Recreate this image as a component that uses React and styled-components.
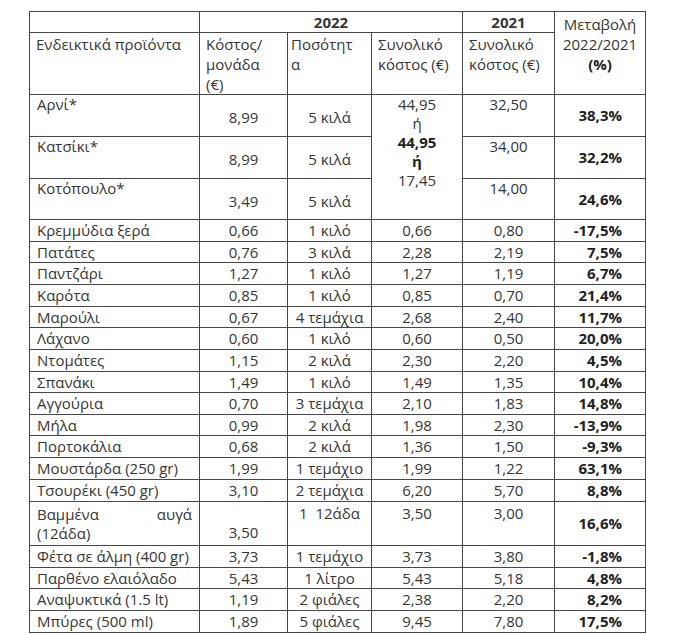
import styled, { createGlobalStyle } from "styled-components";

const GlobalStyle = createGlobalStyle`
    html, body {
        margin: 0;
        padding: 0;
        background: #ffffff;
    }
    body {
        font-family: "Open Sans", "Noto Sans", "DejaVu Sans", sans-serif;
        color: #363636;
    }
`

const Page = styled.div`
    padding: 11px 0 0 29px;
`

const Table = styled.table`
    border-collapse: collapse;
    table-layout: fixed;
    width: 617px;
    font-size: 15px;
    line-height: 19px;
`

const Row = styled.tr`
    height: ${({$h}) => $h}px;
`

const Cell = styled.td`
    border: 1px solid #474747;
    padding: ${({$pad}) => $pad || '0 7px'};
    vertical-align: ${({$valign}) => $valign || 'middle'};
    text-align: ${({$align}) => $align || 'left'};
    font-weight: ${({$bold}) => $bold ? 700 : 400};
    white-space: nowrap;
    overflow: hidden;
`

const HeadCell = styled(Cell)`
    padding: ${({$pad}) => $pad || '1px 6px 0 6px'};
    vertical-align: top;
    line-height: 20px;
`

const Pct = styled(Cell)`
    text-align: right;
    padding: 0 23px 0 0;
    font-weight: 700;
    color: #222222;
`

const Strong = styled.span`
    font-weight: 700;
    color: #222222;
`

const JustLine = styled.div`
    display: flex;
    justify-content: space-between;
`

const meat = [
    ["Αρνί*", "8,99", "5 κιλά", "32,50", "38,3%"],
    ["Κατσίκι*", "8,99", "5 κιλά", "34,00", "32,2%"],
    ["Κοτόπουλο*", "3,49", "5 κιλά", "14,00", "24,6%"],
]

const items = [
    ["Κρεμμύδια ξερά", "0,66", "1 κιλό", "0,66", "0,80", "-17,5%", 22],
    ["Πατάτες", "0,76", "3 κιλά", "2,28", "2,19", "7,5%", 21],
    ["Παντζάρι", "1,27", "1 κιλό", "1,27", "1,19", "6,7%", 22],
    ["Καρότα", "0,85", "1 κιλό", "0,85", "0,70", "21,4%", 22],
    ["Μαρούλι", "0,67", "4 τεμάχια", "2,68", "2,40", "11,7%", 21],
    ["Λάχανο", "0,60", "1 κιλό", "0,60", "0,50", "20,0%", 22],
    ["Ντομάτες", "1,15", "2 κιλά", "2,30", "2,20", "4,5%", 22],
    ["Σπανάκι", "1,49", "1 κιλό", "1,49", "1,35", "10,4%", 21],
    ["Αγγούρια", "0,70", "3 τεμάχια", "2,10", "1,83", "14,8%", 22],
    ["Μήλα", "0,99", "2 κιλά", "1,98", "2,30", "-13,9%", 21],
    ["Πορτοκάλια", "0,68", "2 κιλά", "1,36", "1,50", "-9,3%", 22],
    ["Μουστάρδα (250 gr)", "1,99", "1 τεμάχιο", "1,99", "1,22", "63,1%", 22],
    ["Τσουρέκι (450 gr)", "3,10", "2 τεμάχια", "6,20", "5,70", "8,8%", 22],
]

const tail = [
    ["Φέτα σε άλμη (400 gr)", "3,73", "1 τεμάχιο", "3,73", "3,80", "-1,8%", 22],
    ["Παρθένο ελαιόλαδο", "5,43", "1 λίτρο", "5,43", "5,18", "4,8%", 21],
    ["Αναψυκτικά (1.5 lt)", "1,19", "2 φιάλες", "2,38", "2,20", "8,2%", 22],
    ["Μπύρες (500 ml)", "1,89", "5 φιάλες", "9,45", "7,80", "17,5%", 22],
]

const ItemRow = ({ row }) => {
    const [name, unit, qty, total, prev, pct, h] = row
    return (
        <Row $h={h}>
            <Cell>{name}</Cell>
            <Cell $align="center">{unit}</Cell>
            <Cell $align="center" $pad="0 2px">{qty}</Cell>
            <Cell $align="center">{total}</Cell>
            <Cell $align="center">{prev}</Cell>
            <Pct>{pct}</Pct>
        </Row>
    )
}

export default function App() {
    return (
        <Page>
            <GlobalStyle />
            <Table>
                <colgroup>
                    <col style={{ width: 170 }} />
                    <col style={{ width: 88 }} />
                    <col style={{ width: 84 }} />
                    <col style={{ width: 91 }} />
                    <col style={{ width: 92 }} />
                    <col style={{ width: 91 }} />
                </colgroup>
                <tbody>
                    <Row $h={21}>
                        <Cell />
                        <Cell colSpan={3} $align="center" $bold>2022</Cell>
                        <Cell $align="center" $bold>2021</Cell>
                        <HeadCell rowSpan={2} $align="center" $pad="2px 0 0 0">
                            Μεταβολή<br />2022/2021<br /><Strong>(%)</Strong>
                        </HeadCell>
                    </Row>
                    <Row $h={62}>
                        <HeadCell>Ενδεικτικά προϊόντα</HeadCell>
                        <HeadCell>Κόστος/<br />μονάδα<br />(€)</HeadCell>
                        <HeadCell $pad="1px 2px 0 3px">Ποσότητ<br />α</HeadCell>
                        <HeadCell>Συνολικό<br />κόστος (€)</HeadCell>
                        <HeadCell>Συνολικό<br />κόστος (€)</HeadCell>
                    </Row>
                    {meat.map(([name, unit, qty, prev, pct], i) => (
                        <Row key={name} $h={i === 2 ? 41 : 42}>
                            <Cell $valign="top" $pad="0 7px">{name}</Cell>
                            <Cell $align="center" $pad="4px 7px 0">{unit}</Cell>
                            <Cell $align="center" $pad="4px 2px 0">{qty}</Cell>
                            {i === 0 && (
                                <Cell rowSpan={3} $align="center" $valign="top" $pad="0 4px">
                                    44,95<br />ή<br /><Strong>44,95</Strong><br /><Strong>ή</Strong><br />17,45
                                </Cell>
                            )}
                            <Cell $align="center" $valign="top">{prev}</Cell>
                            <Pct>{pct}</Pct>
                        </Row>
                    ))}
                    {items.map((row) => <ItemRow key={row[0]} row={row} />)}
                    <Row $h={44}>
                        <Cell>
                            <JustLine><span>Βαμμένα</span><span>αυγά</span></JustLine>
                            (12άδα)
                        </Cell>
                        <Cell $align="center" $valign="bottom" $pad="0 7px 3px">3,50</Cell>
                        <Cell $align="center" $valign="top" $pad="2px 2px 0">1&nbsp;&nbsp;12άδα</Cell>
                        <Cell $align="center" $valign="top" $pad="2px 7px 0">3,50</Cell>
                        <Cell $align="center" $valign="top" $pad="2px 7px 0">3,00</Cell>
                        <Pct>16,6%</Pct>
                    </Row>
                    {tail.map((row) => <ItemRow key={row[0]} row={row} />)}
                </tbody>
            </Table>
        </Page>
    )
}
